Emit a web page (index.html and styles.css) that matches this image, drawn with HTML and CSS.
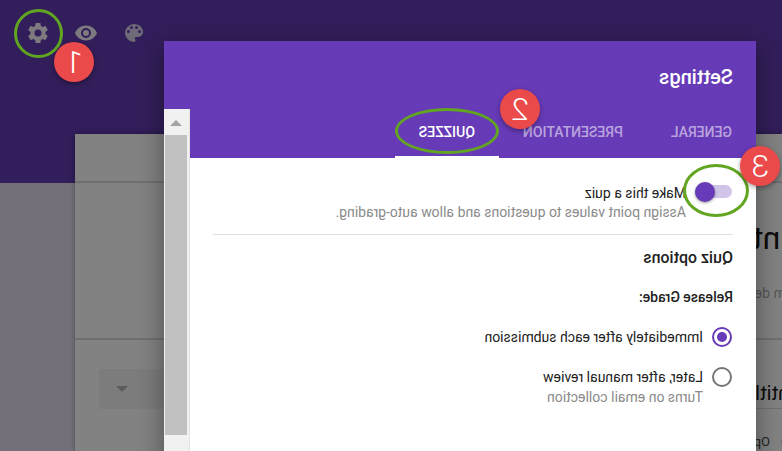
FILE: index.html
```html
<!DOCTYPE html>
<html lang="en">
<head>
<meta charset="utf-8">
<title>Settings</title>
<link rel="stylesheet" href="styles.css">
</head>
<body>
<div class="stage">
  <header class="band">
    <svg class="tool tool-palette" viewBox="0 0 24 24"><path d="M12 3a9 9 0 0 0 0 18c.83 0 1.5-.67 1.5-1.5 0-.39-.15-.74-.39-1.01-.23-.26-.38-.61-.38-.99 0-.83.67-1.5 1.5-1.5H16c2.76 0 5-2.24 5-5 0-4.42-4.03-8-9-8zm-5.5 9a1.5 1.5 0 1 1 0-3 1.5 1.5 0 0 1 0 3zm3-4a1.5 1.5 0 1 1 0-3 1.5 1.5 0 0 1 0 3zm5 0a1.5 1.5 0 1 1 0-3 1.5 1.5 0 0 1 0 3zm3 4a1.5 1.5 0 1 1 0-3 1.5 1.5 0 0 1 0 3z"/></svg>
    <svg class="tool" viewBox="0 0 24 24"><path d="M12 4.5C7 4.5 2.73 7.61 1 12c1.73 4.39 6 7.5 11 7.5s9.27-3.11 11-7.5c-1.73-4.39-6-7.5-11-7.5zM12 17a5 5 0 1 1 0-10 5 5 0 0 1 0 10zm0-8a3 3 0 1 0 0 6 3 3 0 0 0 0-6z"/></svg>
    <svg class="tool" viewBox="0 0 24 24"><path fill-rule="evenodd" d="M19.43 12.98c.04-.32.07-.64.07-.98s-.03-.66-.07-.98l2.11-1.65c.19-.15.24-.42.12-.64l-2-3.46c-.12-.22-.39-.3-.61-.22l-2.49 1c-.52-.4-1.08-.73-1.69-.98l-.38-2.65A.49.49 0 0 0 14 2h-4c-.25 0-.46.18-.49.42l-.38 2.65c-.61.25-1.17.59-1.69.98l-2.49-1c-.23-.09-.49 0-.61.22l-2 3.46c-.13.22-.07.49.12.64l2.11 1.65c-.04.32-.07.65-.07.98s.03.66.07.98l-2.11 1.65c-.19.15-.24.42-.12.64l2 3.46c.12.22.39.3.61.22l2.49-1c.52.4 1.08.73 1.69.98l.38 2.65c.03.24.24.42.49.42h4c.25 0 .46-.18.49-.42l.38-2.65c.61-.25 1.17-.59 1.69-.98l2.49 1c.23.09.49 0 .61-.22l2-3.46c.12-.22.07-.49-.12-.64l-2.11-1.65zM12 15.5a3.5 3.5 0 1 1 0-7 3.5 3.5 0 0 1 0 7z"/></svg>
  </header>

  <section class="form-card">
    <div class="card-head"></div>
    <div class="card-intro">
      <div class="form-title">Untitled form</div>
      <div class="form-desc">Form description</div>
    </div>
    <div class="card-question">
      <div class="q-row">
        <div class="q-title">Untitled Question</div>
        <div class="q-select"><span class="q-arrow"></span></div>
      </div>
      <div class="q-option"><span class="q-circle"></span>Option 1</div>
    </div>
  </section>

  <div class="dialog">
    <div class="dialog-head">
      <h1 class="dialog-title">Settings</h1>
      <nav class="tabs">
        <span class="tab">GENERAL</span>
        <span class="tab">PRESENTATION</span>
        <span class="tab tab-active">QUIZZES</span>
      </nav>
    </div>
    <div class="dialog-body">
      <div class="quiz-row">
        <div class="switch"><span class="switch-track"></span><span class="switch-thumb"></span></div>
        <div class="quiz-text">
          <div class="label">Make this a quiz</div>
          <div class="hint hint-sub">Assign point values to questions and allow auto-grading.</div>
        </div>
      </div>
      <hr class="rule">
      <h2 class="section">Quiz options</h2>
      <h3 class="sub">Release Grade:</h3>
      <div class="radio-row">
        <span class="radio radio-on"></span>
        <div class="label">Immediately after each submission</div>
      </div>
      <div class="radio-row radio-row-2">
        <span class="radio"></span>
        <div>
          <div class="label">Later, after manual review</div>
          <div class="hint">Turns on email collection</div>
        </div>
      </div>
      <h3 class="sub sub-last">Respondent can see:</h3>
    </div>
    <div class="scrollbar">
      <span class="scroll-up"></span>
      <span class="scroll-thumb"></span>
    </div>
  </div>

  <div class="ring ring-1"></div>
  <div class="ring ring-2"></div>
  <div class="ring ring-3"></div>
  <div class="badge badge-1">1</div>
  <div class="badge badge-2">2</div>
  <div class="badge badge-3">3</div>
</div>
</body>
</html>
```

FILE: styles.css
```css
* { box-sizing: border-box; }
html, body { margin: 0; padding: 0; background: #74707a; overflow: hidden; }
.stage {
  position: relative;
  width: 782px;
  height: 451px;
  overflow: hidden;
  transform: scaleX(-1);
  background: #74707a;
  font-family: Roboto, "Liberation Sans", sans-serif;
}
.band {
  height: 183px;
  background: #321e5a;
  display: flex;
  justify-content: flex-end;
  align-items: flex-start;
  gap: 24px;
  padding: 21px 26px 0 0;
}
.tool { width: 24px; height: 24px; fill: #7d7a80; display: block; }
.tool-palette { fill: #6f6a78; transform: scaleX(-1); }

.form-card {
  position: absolute;
  left: 0;
  top: 134px;
  width: 707px;
  height: 317px;
  background: #828282;
  box-shadow: 0 0 5px rgba(0,0,0,.35);
  color: #111;
}
.card-head { height: 49px; border-bottom: 2px solid #6f6f6f; }
.card-intro { height: 155px; padding-top: 35px; }
.form-title { font-size: 32px; line-height: 40px; color: #0c0c0c; white-space: nowrap; margin-left: -19px; }
.form-desc { font-size: 14px; line-height: 20px; color: #555; margin-top: 25px; margin-left: -24px; white-space: nowrap; }
.card-question { border-top: 2px solid #6f6f6f; }
.q-row { display: flex; align-items: flex-start; padding-top: 29px; }
.q-title { font-size: 20px; line-height: 29px; height: 40px; padding-top: 10px; width: 420px; margin-left: -20px; margin-right: auto; color: #0c0c0c; white-space: nowrap; border-bottom: 1px solid #6f6f6f; }
.q-select { width: 120px; height: 40px; background: #7c7c7c; margin-right: 24px; display: flex; align-items: center; justify-content: flex-end; padding-right: 17px; border-radius: 2px; }
.q-arrow { width: 0; height: 0; border: 6px solid transparent; border-top-color: #5c5c5c; border-bottom: 0; }
.q-option { display: flex; align-items: center; gap: 11px; font-size: 13px; line-height: 18px; margin-top: 24px; color: #222; margin-left: -17px; white-space: nowrap; }
.q-circle { width: 18px; height: 18px; flex: none; border: 2px solid #6f6f6f; border-radius: 50%; }

.dialog {
  position: absolute;
  left: 26px;
  top: 41px;
  width: 592px;
  height: 460px;
  background: #fff;
  box-shadow: 0 8px 24px rgba(0,0,0,.4);
}
.dialog-head { height: 117px; background: #673ab7; color: #fff; padding: 24px 24px 0 23px; }
.dialog-title { margin: 0; font-size: 20px; line-height: 24px; font-weight: 500; }
.tabs { display: flex; margin: 20px 0 0 -23px; }
.tab { padding: 0 24px; height: 49px; line-height: 47px; font-size: 14px; font-weight: 500; color: rgba(255,255,255,.55); white-space: nowrap; }
.tab-active { color: #fff; border-bottom: 2px solid #fff; }
.dialog-body { padding: 25px 49px 0 23px; color: #212121; font-size: 14px; }
.quiz-row { display: flex; align-items: flex-start; }
.switch { position: relative; width: 37px; height: 20px; flex: none; margin: 0 9px 0 1px; }
.switch-track { position: absolute; left: 0; top: 2px; width: 37px; height: 13px; border-radius: 7px; background: #d1c4e9; }
.switch-thumb { position: absolute; right: 0; top: -1px; width: 20px; height: 20px; border-radius: 50%; background: #673ab7; box-shadow: 0 1px 3px rgba(0,0,0,.4); }
.label { font-size: 14px; line-height: 20px; color: #212121; white-space: nowrap; }
.hint { font-size: 14px; line-height: 20px; color: #8a8a8a; white-space: nowrap; }
.hint-sub { margin-top: -1px; }
.rule { border: 0; height: 1px; background: #e0e0e0; margin: 12px 0 0 0; }
.section { margin: 13px 0 0; font-size: 16px; line-height: 20px; font-weight: 500; }
.sub { margin: 19px 0 0; font-size: 14px; line-height: 20px; font-weight: 500; }
.sub-last { margin-top: 43px; }
.radio-row { display: flex; align-items: flex-start; margin-top: 20px; gap: 9px; padding-left: 1px; }
.radio-row-2 { margin-top: 20px; }
.radio { width: 20px; height: 20px; flex: none; border: 2px solid #757575; border-radius: 50%; }
.radio-on { border-color: #673ab7; position: relative; }
.radio-on::after { content: ""; position: absolute; inset: 3px; border-radius: 50%; background: #673ab7; }

.scrollbar {
  position: absolute;
  right: 0;
  top: 68px;
  bottom: 0;
  width: 26px;
  background: #f1f1f1;
  border-left: 1px solid #e4e4e4;
  display: flex;
  flex-direction: column;
  align-items: center;
}
.scroll-up { margin-top: 11px; width: 0; height: 0; border: 6px solid transparent; border-bottom-color: #a3a3a3; border-top: 0; }
.scroll-thumb { margin-top: 9px; width: 22px; height: 300px; background: #c1c1c1; }

.ring { position: absolute; border: 3px solid #61a520; border-radius: 50%; }
.ring-1 { left: 719px; top: 9px; width: 49px; height: 49px; }
.ring-2 { left: 283px; top: 108px; width: 104px; height: 46px; }
.ring-3 { left: 33px; top: 164px; width: 66px; height: 53px; }
.badge {
  position: absolute;
  width: 40px;
  height: 40px;
  border-radius: 50%;
  background: #ea4a4a;
  color: #fff;
  font-size: 32px;
  font-weight: 300;
  line-height: 40px;
  text-align: center;
  box-shadow: 0 2px 5px rgba(0,0,0,.35);
}
.badge-1 { left: 688px; top: 42px; }
.badge-2 { left: 242px; top: 89px; }
.badge-3 { left: 2px; top: 146px; }
```
